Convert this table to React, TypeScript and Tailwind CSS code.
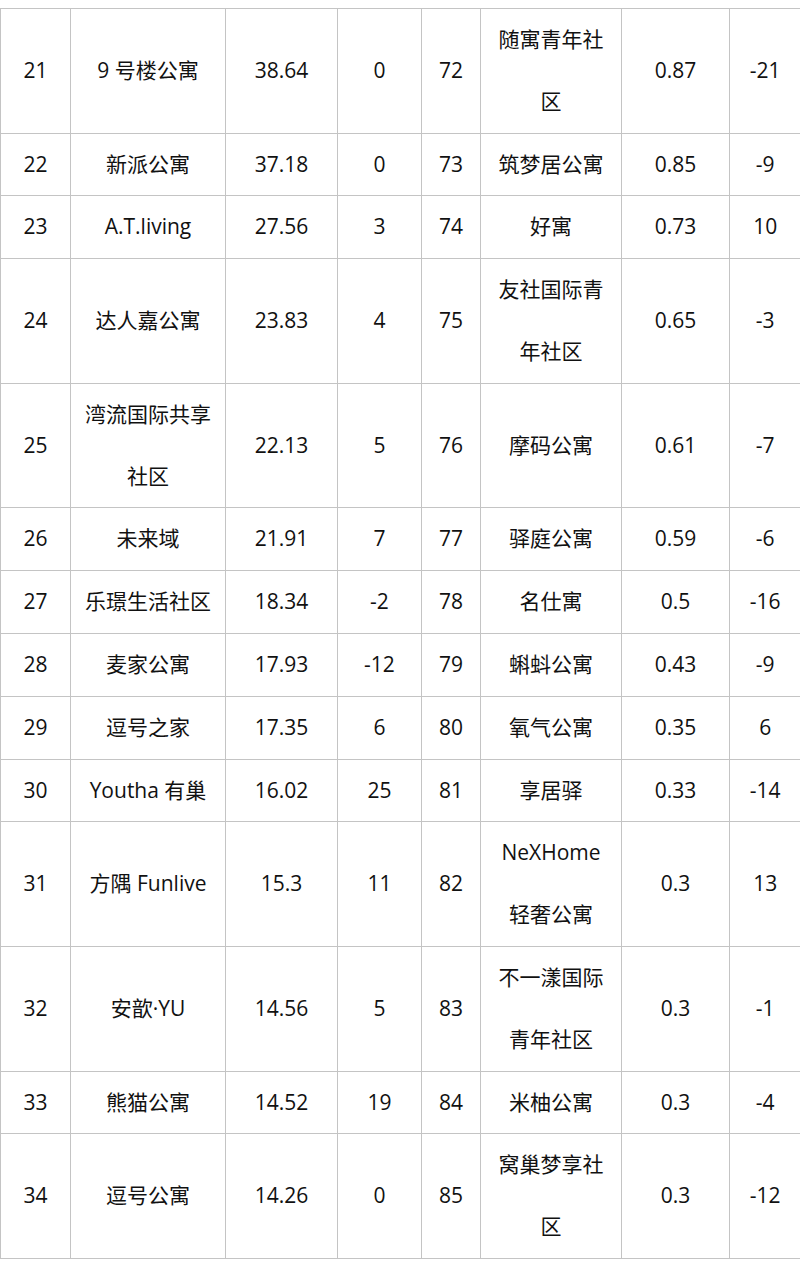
const rows: [string, string, string, string, string, string, string, string][] = [
  ['21', '9 号楼公寓', '38.64', '0', '72', '随寓青年社区', '0.87', '-21'],
  ['22', '新派公寓', '37.18', '0', '73', '筑梦居公寓', '0.85', '-9'],
  ['23', 'A.T.living', '27.56', '3', '74', '好寓', '0.73', '10'],
  ['24', '达人嘉公寓', '23.83', '4', '75', '友社国际青年社区', '0.65', '-3'],
  ['25', '湾流国际共享社区', '22.13', '5', '76', '摩码公寓', '0.61', '-7'],
  ['26', '未来域', '21.91', '7', '77', '驿庭公寓', '0.59', '-6'],
  ['27', '乐璟生活社区', '18.34', '-2', '78', '名仕寓', '0.5', '-16'],
  ['28', '麦家公寓', '17.93', '-12', '79', '蝌蚪公寓', '0.43', '-9'],
  ['29', '逗号之家', '17.35', '6', '80', '氧气公寓', '0.35', '6'],
  ['30', 'Youtha 有巢', '16.02', '25', '81', '享居驿', '0.33', '-14'],
  ['31', '方隅 Funlive', '15.3', '11', '82', 'NeXHome 轻奢公寓', '0.3', '13'],
  ['32', '安歆·YU', '14.56', '5', '83', '不一漾国际青年社区', '0.3', '-1'],
  ['33', '熊猫公寓', '14.52', '19', '84', '米柚公寓', '0.3', '-4'],
  ['34', '逗号公寓', '14.26', '0', '85', '窝巢梦享社区', '0.3', '-12'],
]

const widths = ['w-[70px]', 'w-[155px]', 'w-[112px]', 'w-[84px]', 'w-[59px]', 'w-[141px]', 'w-[108px]', 'w-[71px]']

export default function App() {
  return (
    <div className="w-[800px] h-[1266px] bg-white pt-2 overflow-hidden">
      <table
        className="w-[800px] table-fixed border-collapse text-[21px] leading-[61.8px] text-[#111]"
        style={{ fontFamily: '"Open Sans", "Noto Sans CJK SC", sans-serif' }}
      >
        <colgroup>
          {widths.map((w) => (
            <col key={w} className={w} />
          ))}
        </colgroup>
        <tbody>
          {rows.map((r) => (
            <tr key={r[0]}>
              {r.map((cell, i) => (
                <td
                  key={i}
                  className="border border-[#c4c4c4] last:border-r-0 px-3 py-0 text-center align-middle break-words"
                >
                  {cell}
                </td>
              ))}
            </tr>
          ))}
        </tbody>
      </table>
    </div>
  )
}
